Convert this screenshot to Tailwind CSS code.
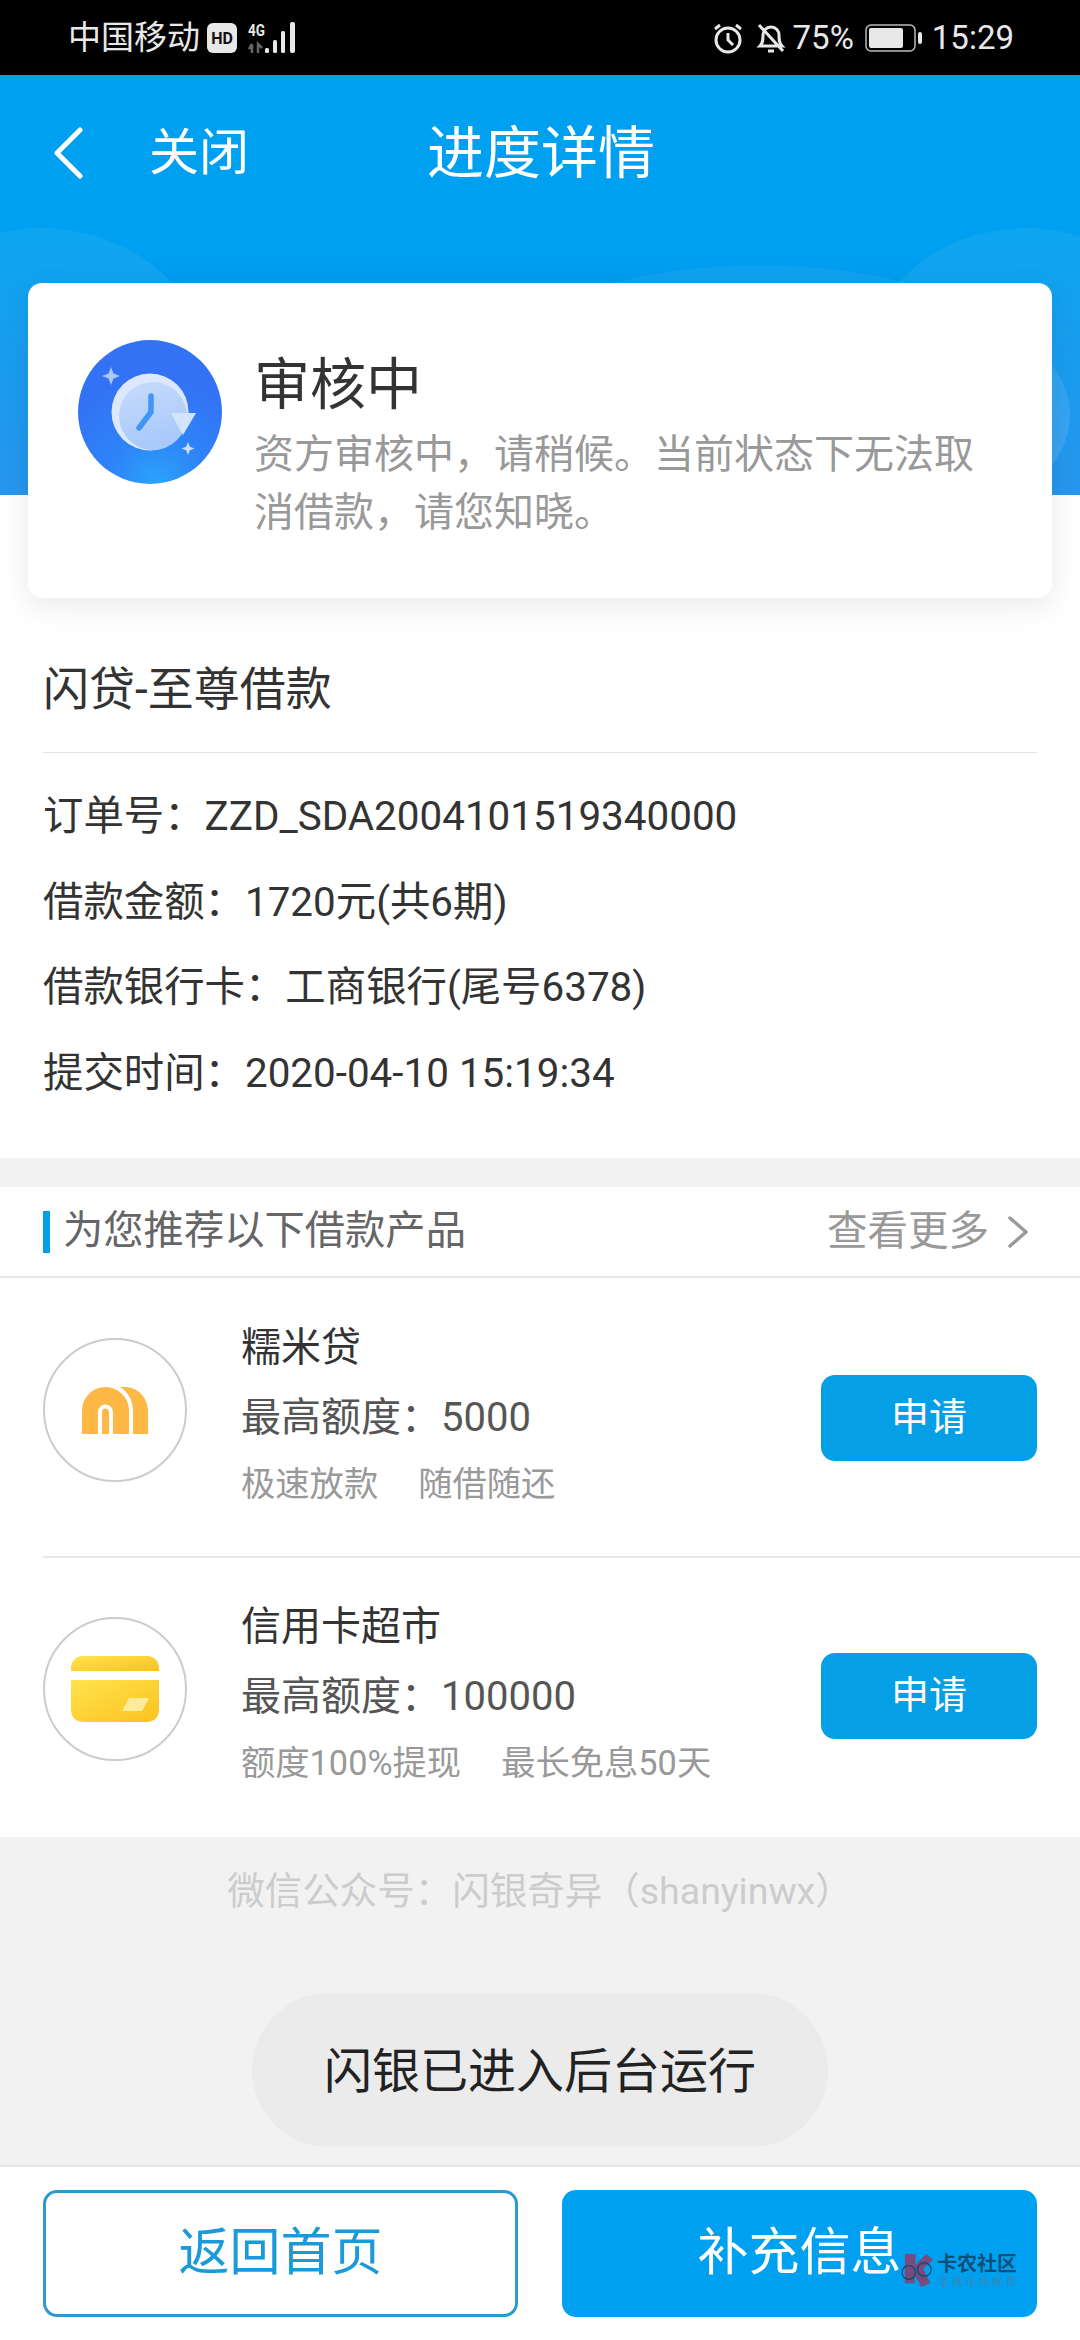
<html>
<head>
    <title>进度详情</title>
    <script src="https://cdn.jsdelivr.net/npm/@tailwindcss/browser@4"></script>
</head>
<body class="bg-[#f2f2f2] font-['Roboto','Noto_Sans_CJK_SC',sans-serif]">
<div class="relative w-[1080px] h-[2340px] overflow-hidden flex flex-col">

    <!-- status bar -->
    <div class="h-[75px] bg-black flex items-center justify-between pl-[68px] pr-[66px] text-[#e8e8e8] shrink-0">
        <div class="flex items-center">
            <span class="text-[33px] leading-none">中国移动</span>
            <svg class="ml-[7px]" width="30" height="30" viewBox="0 0 30 30"><rect width="30" height="30" rx="6" fill="#e8e8e8"/><text x="15" y="21" text-anchor="middle" font-size="16" font-weight="700" fill="#111" font-family="Roboto">HD</text></svg>
            <svg class="ml-[11px]" width="50" height="34" viewBox="0 0 50 34">
                <text x="0" y="15" font-size="16" font-weight="700" fill="#e8e8e8" font-family="Roboto" textLength="17" lengthAdjust="spacingAndGlyphs">4G</text>
                <path d="M4 32v-9M1 28l3-5M10 32v-9l4 4" fill="none" stroke="#666" stroke-width="2.5"/>
                <rect x="17" y="27" width="4" height="5" rx="1.5" fill="#e8e8e8"/>
                <rect x="25" y="19" width="4" height="13" rx="1.5" fill="#e8e8e8"/>
                <rect x="33" y="10" width="4" height="22" rx="1.5" fill="#e8e8e8"/>
                <rect x="42" y="1" width="5" height="31" rx="2" fill="#e8e8e8"/>
            </svg>
        </div>
        <div class="flex items-center">
            <svg width="32" height="32" viewBox="0 0 32 32" fill="none" stroke="#e8e8e8" stroke-width="3"><circle cx="16" cy="18" r="12"/><path d="M16 11v7l5 5M3 7l5-4M29 7l-5-4"/></svg>
            <svg class="ml-[12px]" width="30" height="32" viewBox="0 0 30 32" fill="none" stroke="#e8e8e8" stroke-width="3"><path d="M4 24c3-3 3-6 3-11 0-4 3-8 8-8s8 4 8 8c0 5 0 8 3 11zM12 29h6M3 3l24 26"/></svg>
            <span class="ml-[7px] text-[33px] leading-none">75%</span>
            <svg class="ml-[11px]" width="58" height="28" viewBox="0 0 58 28"><rect x="1" y="1" width="49" height="26" rx="5" fill="none" stroke="#bbb" stroke-width="1.5"/><rect x="4" y="4" width="34" height="20" rx="2" fill="#e8e8e8"/><rect x="53" y="8" width="4" height="12" rx="2" fill="#e8e8e8"/></svg>
            <span class="ml-[9px] text-[33px] leading-none">15:29</span>
        </div>
    </div>

    <!-- header -->
    <div class="relative h-[420px] shrink-0 overflow-hidden bg-[linear-gradient(180deg,#00a0f0_0%,#00a0f0_40%,#0585ec_100%)]">
        <div class="absolute left-[-129px] top-[153px] w-[340px] h-[300px] rounded-[50%] bg-linear-to-b from-white/5 to-white/15"></div>
        <div class="absolute left-[450px] top-[190px] w-[620px] h-[300px] rounded-[50%] bg-linear-to-b from-white/5 to-white/15"></div>
        <div class="absolute left-[861px] top-[153px] w-[330px] h-[300px] rounded-[50%] bg-linear-to-b from-white/5 to-white/15"></div>
        <div class="relative flex items-center h-[156px] pl-[52px] text-white">
            <svg width="32" height="52" viewBox="0 0 32 52" fill="none" stroke="white" stroke-width="5" stroke-linecap="round" stroke-linejoin="round"><path d="M28 3L5 26l23 23"/></svg>
            <span class="ml-[65px] text-[50px] leading-none">关闭</span>
            <span class="ml-[178px] text-[57px] leading-none">进度详情</span>
        </div>
    </div>

    <!-- white content -->
    <div class="bg-white shrink-0 h-[663px] px-[43px]">
        <div class="relative -mt-[212px] -mx-[15px] h-[315px] bg-white rounded-[14px] shadow-[0_8px_30px_rgba(0,0,0,0.09)] flex items-start pl-[50px] pt-[57px]">
            <svg class="shrink-0" width="144" height="144" viewBox="0 0 144 144">
                <defs>
                    <radialGradient id="disc" cx="0.55" cy="1" r="0.75"><stop offset="0" stop-color="#2aa4fb"/><stop offset="0.45" stop-color="#2e84f8"/><stop offset="1" stop-color="#3372f5"/></radialGradient>
                    <linearGradient id="face" x1="0" y1="0" x2="0.3" y2="1"><stop offset="0" stop-color="#c8dbfb"/><stop offset="1" stop-color="#a8c9fb"/></linearGradient>
                </defs>
                <circle cx="72" cy="72" r="72" fill="url(#disc)"/>
                <circle cx="72" cy="72" r="38.5" fill="#dbe8fd"/>
                <circle cx="75" cy="76" r="34" fill="url(#face)"/>
                <path d="M93 73h25l-13 22z" fill="#d5e4fd"/>
                <path d="M73 56v16L61 88" fill="none" stroke="#3d97f6" stroke-width="5.5" stroke-linecap="round" stroke-linejoin="round"/>
                <path d="M33 27l2.5 6.5 6.5 2.5-6.5 2.5L33 45l-2.500-6.500-6.500-2.500 6.500-2.500z" fill="#a9c8fb"/>
                <path d="M110 102l1.800 4.700 4.700 1.800-4.700 1.800-1.800 4.700-1.800-4.700-4.700-1.800 4.700-1.800z" fill="#cfe0fd"/>
            </svg>
            <div class="ml-[32px]">
                <div class="text-[56px] leading-none text-[#333] mt-[17px]">审核中</div>
                <div class="text-[40px] leading-[58px] text-[#999] mt-[13px] w-[735px]">资方审核中，请稍候。当前状态下无法取消借款，请您知晓。</div>
            </div>
        </div>

        <div class="h-[155px] pt-[28px] flex items-center border-b border-[#e2e2e2] text-[46px] text-[#333]">闪贷-至尊借款</div>
        <div class="pt-[21px] text-[40.4px] text-[#333]">
            <div class="h-[86px] flex items-center">订单号：ZZD_SDA2004101519340000</div>
            <div class="h-[86px] flex items-center">借款金额：1720元(共6期)</div>
            <div class="h-[85px] flex items-center">借款银行卡：工商银行(尾号6378)</div>
            <div class="h-[86px] flex items-center">提交时间：2020-04-10 15:19:34</div>
        </div>
    </div>

    <!-- recommendations -->
    <div class="mt-[29px] bg-white shrink-0 h-[650px]">
        <div class="h-[91px] border-b-2 border-[#e6e6e6] flex items-center justify-between pl-[43px] pr-[52px]">
            <div class="flex items-center">
                <div class="w-[7px] h-[42px] bg-[#049fe4]"></div>
                <span class="ml-[13px] text-[40.3px] text-[#666]">为您推荐以下借款产品</span>
            </div>
            <div class="flex items-center text-[40.5px] text-[#999]">
                查看更多
                <svg class="ml-[19px]" width="20" height="32" viewBox="0 0 20 32" fill="none" stroke="#999" stroke-width="3.5" stroke-linecap="round" stroke-linejoin="round"><path d="M2 2l16 14L2 30"/></svg>
            </div>
        </div>

        <div class="h-[280px] ml-[43px] border-b-2 border-[#e8e8e8] flex items-center pr-[43px]">
            <div class="w-[144px] h-[144px] rounded-full border-2 border-[#cccccc] flex items-center justify-center shrink-0 mb-[14px]">
                <svg width="66" height="47" viewBox="0 0 66 47">
                    <path d="M0 47V23.500a23.500 23.500 0 0 1 47 0V47z" fill="#fdb845"/>
                    <path d="M18 47V25a5.500 5.500 0 0 1 11 0v22" fill="none" stroke="white" stroke-width="4"/>
                    <path d="M38 0h5c13 0 23 11 23 24v23H51V24C51 13 46 5 38 0z" fill="#fdb845"/>
                </svg>
            </div>
            <div class="ml-[54px] flex-1 -mt-[4px]">
                <div class="text-[40px] leading-[48px] text-[#333]">糯米贷</div>
                <div class="text-[40px] leading-[48px] text-[#555] mt-[22px]">最高额度：5000</div>
                <div class="text-[34.300px] leading-[44px] text-[#999] mt-[20px]">极速放款<span class="ml-[40px]">随借随还</span></div>
            </div>
            <div class="w-[216px] h-[86px] rounded-[14px] bg-[#049fe4] text-white text-[38px] flex items-center justify-center shrink-0 mt-[1px]">申请</div>
        </div>

        <div class="h-[278px] ml-[43px] flex items-center pr-[43px]">
            <div class="w-[144px] h-[144px] rounded-full border-2 border-[#cccccc] flex items-center justify-center shrink-0 mb-[16px]">
                <svg width="88" height="66" viewBox="0 0 88 66">
                    <defs><linearGradient id="card" x1="0" y1="0" x2="1" y2="1"><stop offset="0" stop-color="#ffe34d"/><stop offset="1" stop-color="#fcc21f"/></linearGradient></defs>
                    <path d="M0 15V12C0 5 5 0 12 0h64c7 0 12 5 12 12v3z" fill="url(#card)"/>
                    <path d="M0 24h88v30c0 7-5 12-12 12H12C5 66 0 61 0 54z" fill="url(#card)"/>
                    <path d="M58 42h20l-7 13H51z" fill="#ffeb9c"/>
                </svg>
            </div>
            <div class="ml-[54px] flex-1 -mt-[6px]">
                <div class="text-[40px] leading-[48px] text-[#333]">信用卡超市</div>
                <div class="text-[40px] leading-[48px] text-[#555] mt-[22px]">最高额度：100000</div>
                <div class="text-[34.300px] leading-[44px] text-[#999] mt-[20px]">额度100%提现<span class="ml-[40px]">最长免息50天</span></div>
            </div>
            <div class="w-[216px] h-[86px] rounded-[14px] bg-[#049fe4] text-white text-[38px] flex items-center justify-center shrink-0 mt-[-3px]">申请</div>
        </div>
    </div>

    <!-- footer note -->
    <div class="flex-1 flex flex-col items-center pt-[28px]">
        <div class="text-[37.500px] leading-[52px] text-[#cccccc]">微信公众号：闪银奇异（shanyinwx）</div>
    </div>

    <!-- bottom bar -->
    <div class="h-[175px] shrink-0 bg-white border-t-2 border-[#e6e6e6] flex justify-between px-[43px] pt-[23px]">
        <div class="w-[475px] h-[127px] rounded-[14px] border-[3px] border-[#2a9ad0] text-[#1a9ad8] text-[51px] flex items-center justify-center">返回首页</div>
        <div class="w-[475px] h-[127px] rounded-[14px] bg-[#00a0f0] text-white text-[51px] flex items-center justify-center">补充信息</div>
    </div>

    <!-- toast -->
    <div class="absolute left-[252px] top-[1993px] w-[576px] h-[154px] pt-[4px] rounded-[77px] bg-[#ebebeb] text-[#222] text-[48px] flex items-center justify-center">闪银已进入后台运行</div>

    <!-- watermark -->
    <div class="absolute left-[900px] top-[2253px] flex items-center">
        <svg width="35" height="35" viewBox="0 0 36 36"><path d="M5 1h11v11L27 1l7 6-10 9 7 15-9 4-7-13v9H5z" fill="#7a4a7c"/><circle cx="9" cy="20" r="7" fill="none" stroke="#0d4f78" stroke-width="1.5"/><circle cx="25" cy="17" r="7" fill="none" stroke="#0d4f78" stroke-width="1.5"/></svg>
        <div class="ml-[2px]">
            <div class="text-[20px] leading-[20px] font-bold text-[#0d4f78]">卡农社区</div>
            <div class="text-[10px] leading-[12px] text-[#3b86b8] tracking-[3.3px] mt-[2px] ml-[2px]">金融在线教育</div>
        </div>
    </div>
</div>
</body>
</html>
